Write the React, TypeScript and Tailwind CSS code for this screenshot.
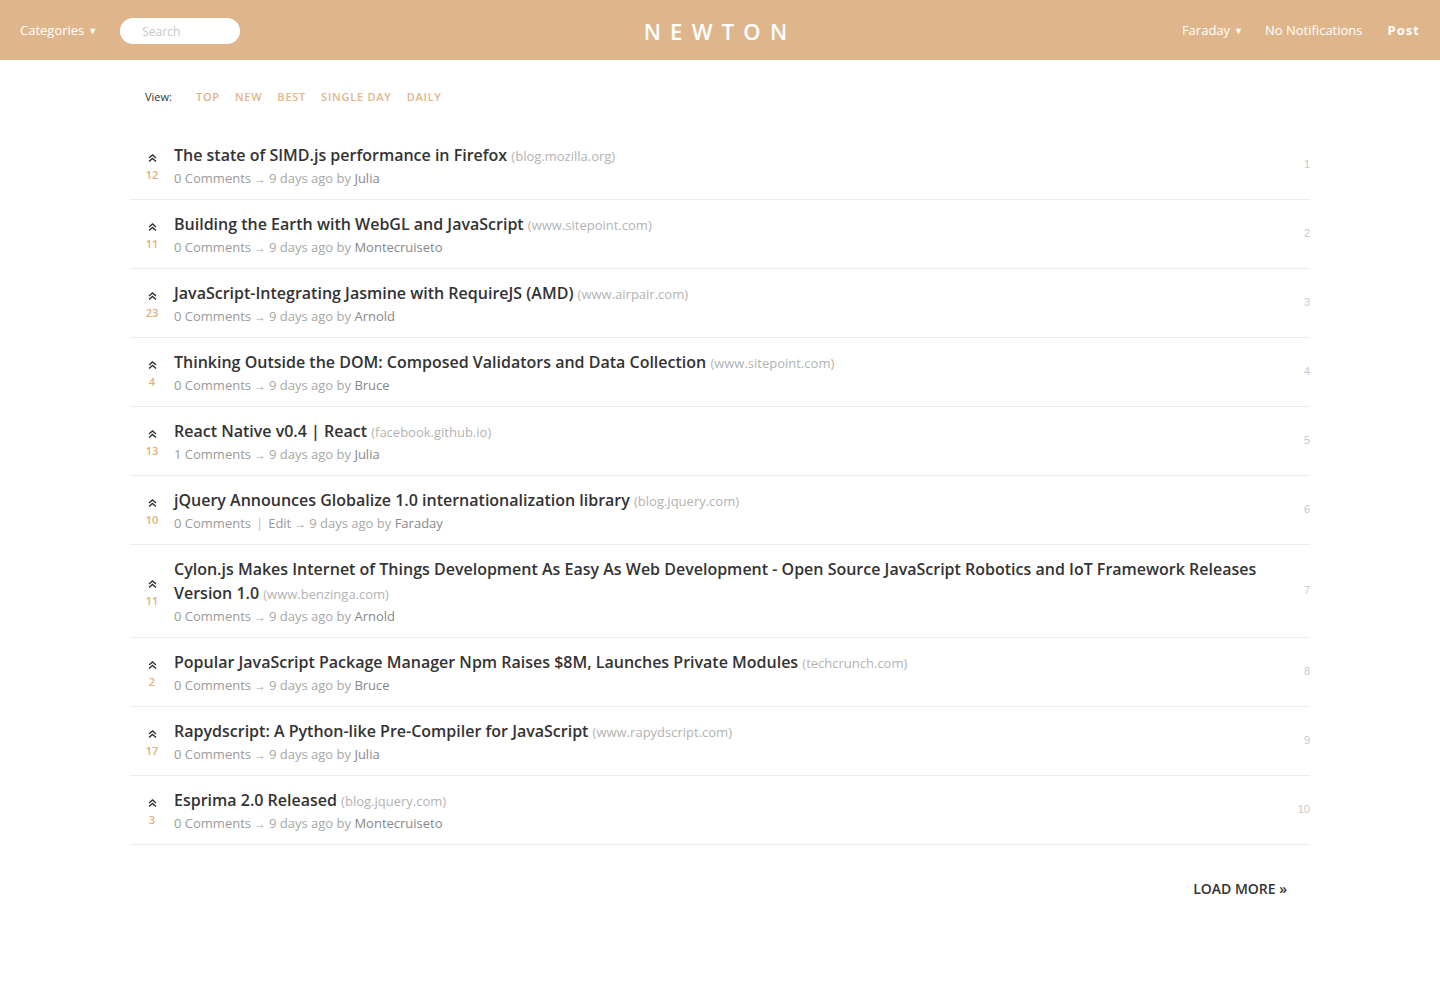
import { useState } from "react";

type TPost = {
  id: number;
  title: string;
  domain: string;
  score: number;
  comments: number;
  author: string;
  canEdit?: boolean;
};

const posts: TPost[] = [
  { id: 1, title: "The state of SIMD.js performance in Firefox", domain: "blog.mozilla.org", score: 12, comments: 0, author: "Julia" },
  { id: 2, title: "Building the Earth with WebGL and JavaScript", domain: "www.sitepoint.com", score: 11, comments: 0, author: "Montecruiseto" },
  { id: 3, title: "JavaScript-Integrating Jasmine with RequireJS (AMD)", domain: "www.airpair.com", score: 23, comments: 0, author: "Arnold" },
  { id: 4, title: "Thinking Outside the DOM: Composed Validators and Data Collection", domain: "www.sitepoint.com", score: 4, comments: 0, author: "Bruce" },
  { id: 5, title: "React Native v0.4 | React", domain: "facebook.github.io", score: 13, comments: 1, author: "Julia" },
  { id: 6, title: "jQuery Announces Globalize 1.0 internationalization library", domain: "blog.jquery.com", score: 10, comments: 0, author: "Faraday", canEdit: true },
  { id: 7, title: "Cylon.js Makes Internet of Things Development As Easy As Web Development - Open Source JavaScript Robotics and IoT Framework Releases Version 1.0", domain: "www.benzinga.com", score: 11, comments: 0, author: "Arnold" },
  { id: 8, title: "Popular JavaScript Package Manager Npm Raises $8M, Launches Private Modules", domain: "techcrunch.com", score: 2, comments: 0, author: "Bruce" },
  { id: 9, title: "Rapydscript: A Python-like Pre-Compiler for JavaScript", domain: "www.rapydscript.com", score: 17, comments: 0, author: "Julia" },
  { id: 10, title: "Esprima 2.0 Released", domain: "blog.jquery.com", score: 3, comments: 0, author: "Montecruiseto" },
];

const views = ["Top", "New", "Best", "Single Day", "Daily"];

const UpvoteIcon = () => (
  <svg width="9" height="8" viewBox="0 0 9 8" fill="none" stroke="#333" strokeWidth="1.4">
    <path d="M1 4 L4.5 1 L8 4" />
    <path d="M1 7.5 L4.5 4.5 L8 7.5" />
  </svg>
);

const PostItem = ({ post, rank }: { post: TPost; rank: number }) => {
  return (
    <div className="flex items-center border-b border-[#e8eeee] pt-[12px] pb-[10px]">
      {/* Vote */}
      <div className="w-[44px] shrink-0 flex flex-col items-center pt-[4px]">
        <a href="#" className="h-[13px] flex items-center">
          <UpvoteIcon />
        </a>
        <span className="text-[11px] leading-[20px] font-semibold text-[#e3ad7d]">{post.score}</span>
      </div>

      {/* Content */}
      <div className="flex-1 min-w-0 pr-10">
        <h3 className="text-[16px] leading-[24px] font-semibold text-[#333]">
          <a href="#">{post.title}</a>{" "}
          <span className="text-[13px] leading-[16px] font-normal text-[#b3b3b3]">({post.domain})</span>
        </h3>
        <div className="text-[13px] leading-[22px] text-[#a8a8a8]">
          <a href="#" className="text-[#9a9a9a]">{post.comments} Comments</a>
          {post.canEdit && (
            <>
              <span className="mx-[5px] text-[#bbb]">|</span>
              <a href="#" className="text-[#9a9a9a]">Edit</a>
            </>
          )}
          <span className="mx-[3px] text-[12px] leading-none">→</span>
          9 days ago by <a href="#" className="text-[#888]">{post.author}</a>
        </div>
      </div>

      {/* Rank */}
      <div className="shrink-0 text-[11px] text-[#c8c8c8] font-['Liberation_Sans',sans-serif] pb-[3px]">{rank}</div>
    </div>
  );
};

export default function App() {
  const [view, setView] = useState("Top");

  return (
    <div className="min-h-screen bg-white font-['Open_Sans',sans-serif] text-[#333]">
      {/* Header */}
      <header className="h-[60px] bg-[#dfb68c] flex items-center justify-between px-5 pt-[2px] text-white">
        <div className="flex items-center flex-1">
          <a href="#" className="text-[13px] flex items-center gap-1">
            Categories <span className="text-[9px]">▼</span>
          </a>
          <input
            type="text"
            placeholder="Search"
            className="ml-[23px] w-[120px] h-[26px] rounded-full bg-white px-[22px] text-[12px] text-[#555] placeholder:text-[#c8c8c8] outline-none"
          />
        </div>
        <h1 className="text-[22px] font-semibold tracking-[0.42em]">NEWTON</h1>
        <div className="flex items-center justify-end flex-1 text-[13px]">
          <a href="#" className="flex items-center gap-1">
            Faraday <span className="text-[9px]">▼</span>
          </a>
          <a href="#" className="ml-[22px]">No Notifications</a>
          <a href="#" className="ml-[25px] font-bold tracking-[0.08em]">Post</a>
        </div>
      </header>

      <main className="mx-[130px]">
        {/* View nav */}
        <div className="flex items-center pl-[15px] h-[71px] pt-[3px]">
          <span className="text-[11px] text-[#333] mr-[24px]">View:</span>
          <div className="flex gap-[15px]">
            {views.map((v) => (
              <a
                key={v}
                href="#"
                onClick={() => setView(v)}
                className={`text-[11px] uppercase font-semibold tracking-[0.07em] ${
                  view === v ? "text-[#dfb08a]" : "text-[#e3b58c]"
                }`}
              >
                {v}
              </a>
            ))}
          </div>
        </div>

        {/* Posts */}
        <div>
          {posts.map((post, index) => (
            <PostItem key={post.id} post={post} rank={index + 1} />
          ))}
        </div>

        {/* Load more */}
        <div className="flex justify-end pt-[33px] pr-[23px]">
          <a href="#" className="text-[14px] font-semibold text-[#333] uppercase">
            Load more »
          </a>
        </div>
      </main>
    </div>
  );
}
